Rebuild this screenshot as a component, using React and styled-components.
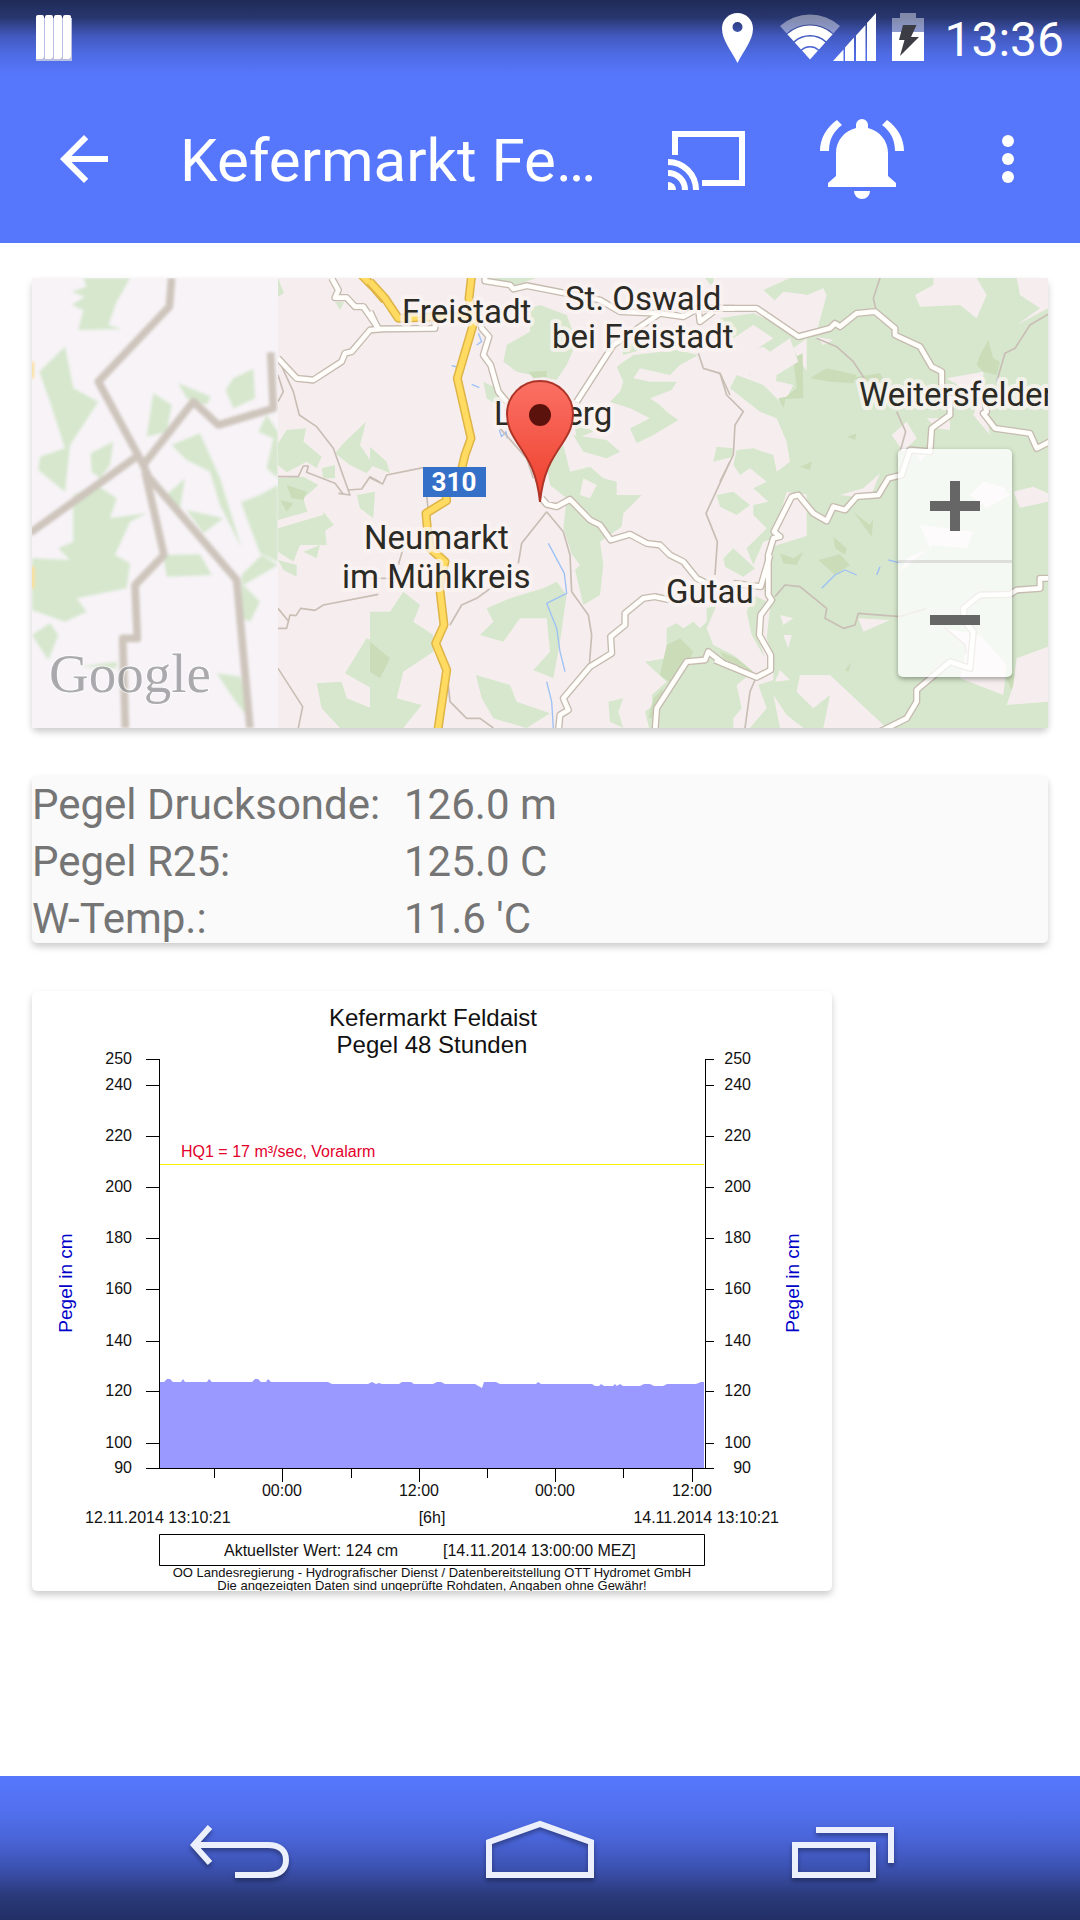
import React from 'react';
import styled, { createGlobalStyle } from 'styled-components';

const GlobalStyle = createGlobalStyle`
  * {
    box-sizing: border-box;
  }
  body {
    margin: 0;
    background-color: #fff;
    font-family: Roboto, 'Liberation Sans', sans-serif;
  }
`;

const Page = styled.div`
  display: flex;
  flex-direction: column;
  min-height: 100vh;
`;

const Header = styled.header`
  color: white;
  background: #5677fc linear-gradient(#1f2a57 0, #293770 18px, #4259be 36px, #4e6be3 54px, #5677fc 75px);
`;

const StatusBar = styled.div`
  display: flex;
  align-items: center;
  gap: 16px;
  height: 75px;
  padding: 0 16px 0 36px;
`;

const Spacer = styled.span`
  flex: 1;
`;

const Clock = styled.time`
  padding-top: 4px;
  font-size: 48px;
  line-height: 56px;
`;

const Toolbar = styled.div`
  display: flex;
  align-items: center;
  height: 168px;
  padding: 0 36px 0 48px;
`;

const Title = styled.h1`
  flex: 1;
  min-width: 0;
  margin: 0 60px;
  padding-top: 4px;
  overflow: hidden;
  white-space: nowrap;
  text-overflow: ellipsis;
  font-size: 60px;
  font-weight: 400;
  line-height: 72px;
`;

const Actions = styled.div`
  display: flex;
  align-items: center;
  gap: 64px;
`;

const IconButton = styled.button`
  display: flex;
  padding: 0;
  border: none;
  background: none;
  color: inherit;
`;

const Main = styled.main`
  display: flex;
  flex: 1;
  flex-direction: column;
  gap: 48px;
  padding: 35px 32px 48px;
`;

const Card = styled.section`
  position: relative;
  border-radius: 5px;
  background-color: ${(props) => props.$color || '#fff'};
  box-shadow: 0 4px 7px rgba(0, 0, 0, 0.2);
`;

const ChartCard = styled(Card)`
  width: 100%;
  max-width: 800px;
`;

const Drawing = styled.svg`
  display: block;
  width: 100%;
  height: ${(props) => props.$height || 'auto'};
`;

const ZoomControl = styled.div`
  position: absolute;
  right: 36px;
  bottom: 51px;
  display: flex;
  flex-direction: column;
  width: 114px;
  border-radius: 5px;
  background-color: rgba(255, 255, 255, 0.75);
  box-shadow: 0 2px 5px rgba(0, 0, 0, 0.35);
`;

const ZoomButton = styled(IconButton)`
  align-items: center;
  justify-content: center;
  height: 114px;
  color: #666;

  & + & {
    box-shadow: 0 -3px 0 rgba(0, 0, 0, 0.1);
  }
`;

const Readings = styled.table`
  border-spacing: 0;
  color: #757575;
  font-size: 42px;
  line-height: 49px;

  th,
  td {
    padding: 4px 0;
    font-weight: 400;
    text-align: left;
  }
  th {
    width: 372px;
  }
  tr:last-child > * {
    padding-bottom: 0;
  }
`;

const NavBar = styled.nav`
  display: flex;
  justify-content: center;
  height: 144px;
  background: linear-gradient(#5677fc 0, #5270ee 35px, #4a65d9 62px, #3d53b4 90px, #2a3979 120px, #222f66 144px);
`;

const NavButton = styled(IconButton)`
  align-items: center;
  justify-content: center;
  width: 300px;
  color: #eceffc;

  svg {
    overflow: visible;
    filter: drop-shadow(0 3px 2px rgba(0, 0, 0, 0.35));
  }
`;

const MapLabel = styled.text`
  fill: #2b2a25;
  stroke: rgba(250, 244, 242, 0.8);
  stroke-width: 8px;
  stroke-linejoin: round;
  paint-order: stroke;
  font-size: 33px;
`;

const GoogleMark = styled.text`
  fill: #77767a;
  fill-opacity: 0.6;
  stroke: rgba(255, 255, 255, 0.7);
  stroke-width: 2px;
  paint-order: stroke;
  font-family: 'Liberation Serif', serif;
  font-size: 55px;
`;

const RoadNumber = styled.text`
  fill: white;
  font-size: 26px;
  font-weight: 700;
`;

const ChartText = styled.text`
  fill: ${(props) => props.$color || '#111'};
  font-family: 'Liberation Sans', Arial, sans-serif;
  font-size: ${(props) => props.$size || 16}px;
  white-space: pre;
`;

/* ---------- map data, sheets drawn at triple scale ---------- */

const farForests = [
  '190,39 330,39 290,110 265,180 305,192 175,195 190,135 155,120 195,95 155,80 200,65',
  '135,245 160,370 235,410 150,540 135,680 55,615 60,575 135,550 90,410 58,320',
  '400,385 455,420 440,500 380,515',
  '475,355 572,395 560,420 500,400',
  '700,312 705,400 640,430 617,375 640,340',
  '455,540 540,505 600,640 665,850 600,720 570,620 500,585',
  '500,735 610,760 590,775 550,805',
  '495,640 480,730 440,690',
  '280,530 270,600 240,640 215,620 212,565',
  '36,880 150,885 115,850 160,830 160,690 230,660 290,700 270,760 380,745 330,770 285,870 330,895 320,970 170,1000 200,1040 135,1070 36,1035',
  '430,870 540,868 575,930 440,935',
  '663,712 720,690 774,660 774,890 720,865',
  '725,870 774,900 670,960 720,1010 690,1070 665,1060 665,930',
  '36,1110 90,1075 115,1110 85,1185',
  '590,1225 660,1235 700,1380 640,1300',
  '180,1205 290,1190 290,1210',
  '740,450 774,500 774,640 740,610 760,520 715,500',
];

const farRoads = [
  '455,39 448,125 235,350 370,600 385,635 650,945 690,1389',
  '30,804 350,575',
  '370,600 520,410 595,480 760,430 752,262',
  '375,620 432,870 345,960 352,1120 308,1120 316,1389',
];

const sheets = [
  {
    x: -12,
    y: -13,
    forests: [
      '774,39 792,85 774,95',
      '945,110 972,112 960,135',
      '774,535 800,495 858,490 850,530 905,575 890,610 860,590 800,622 774,600',
      '774,640 850,635 895,660 850,700 862,740 774,765',
      '774,790 840,770 910,750 920,840 840,840 820,890 774,860',
      '774,885 830,900 830,935 790,915',
      '850,860 900,840 890,880',
      '1038,470 1020,540 1060,600 1040,625 990,600 945,565 975,530',
      '905,610 945,600 945,640 910,640',
      '1010,690 1065,680 1060,760 1020,730',
      '910,740 942,780 910,800',
      '890,1255 965,1250 980,1300 1080,1340 1080,1389 960,1389 905,1330',
      '1040,1120 1090,1140 1090,1290 975,1225',
    ],
    shades: ['800,660 860,680 850,705 815,700', '780,705 820,715 800,740', '1050,1150 1080,1140 1080,1220'],
    clearings: [],
    tracks: [
      '774,280 820,380 838,450 890,485 940,550 990,690 955,685',
      '774,635 835,635 850,603 865,603 860,622 945,655 970,688',
      '985,675 1025,672 1050,635 1080,652',
      '774,1090 800,1090 810,1050 828,1052 842,1030 885,1036 910,1020 1075,988',
      '774,1030 805,1068',
      '774,1210 848,1325 835,1389',
      '774,330 790,380 774,410',
    ],
    roads: [
      '935,39 955,75 945,98 980,98 1005,125 1030,125 1075,190',
      '774,280 830,340 880,345 965,290 975,265 995,260 1050,195 1085,192',
    ],
    highways: ['1015,20 1062,68 1095,106'],
    streams: [],
  },
  {
    x: 338,
    y: -13,
    forests: [
      '365,39 500,39 430,62',
      '510,120 590,150 620,230 590,300 560,345 440,320 400,290 410,240 480,200 480,130',
      '620,90 700,100 690,140 640,130',
      '530,600 580,540 600,620 660,605 700,640 740,650 740,690 815,690 760,745 755,785 690,830 700,900 690,990 640,1020 600,850 580,790 590,700 540,660',
      '520,970 560,950 590,990 570,1130 550,1240 490,1215 540,1160 530,1060 450,1060 400,1130 330,1110 370,1070 350,1030 420,1000',
      '318,1230 420,1260 440,1310 540,1345 470,1389 370,1360 335,1300',
      '0,1040 60,1040 100,980 150,1020 130,1070 190,1110 190,1160 100,1220 80,1300 155,1320 100,1389 0,1389',
      '715,1310 760,1300 745,1340 760,1389 720,1370',
      '0,545 50,590 60,625 0,600',
      '340,350 400,380 380,420 350,400',
    ],
    shades: ['0,1130 60,1180 30,1240 0,1220', '475,320 530,318 530,335 490,340'],
    clearings: ['640,640 680,660 660,700 630,690', '600,860 630,900 610,920'],
    tracks: [
      '530,740 580,800 600,870 605,980 655,1050 665,1110 658,1200',
      '530,740 455,835 445,895',
      '375,960 320,1000 275,1020 240,1080',
      '0,638 38,657 50,630 160,608',
      '230,1215 240,1310 290,1360 330,1360 370,1389',
      '985,265 1000,310 1050,325 1080,390',
      '1080,590 1008,745 1042,830 1035,930',
      '170,690 175,740',
      '390,490 470,580 490,640',
      '85,900 105,830',
      '0,940 60,940',
    ],
    roads: [
      '345,20 345,48 420,60 430,72 470,62 690,105 750,140 870,145 940,155 985,130 1094,130',
      '985,130 990,170 1030,140',
      '870,145 730,240 620,410',
      '330,150 335,190 357,215 340,270 362,300 385,380 410,410',
      '0,140 25,192 195,190 195,165',
      '515,700 530,718 560,725 600,703 660,765 690,780 722,825 780,808 830,835 870,840 900,870 940,890 980,940 1010,955',
      '565,1400 570,1350 595,1335 580,1300 660,1205 725,1165 722,1115 765,1080 765,1045 820,1000 855,995 900,1005',
      '855,1400 860,1330 950,1190 1005,1185 1015,1160 1060,1195 1100,1210',
    ],
    highways: [
      '0,50 45,100 85,160 200,155 310,155',
      '305,30 297,100 312,170 262,340 303,520 285,570 275,612',
      '228,690 230,707 168,745 172,790 180,850 225,890 208,960 222,1080 197,1135 230,1215 203,1400',
    ],
    streams: [
      '535,835 583,925 590,985 530,1015 560,1090 570,1160 585,1220',
      '530,1250 545,1310 550,1389',
      '325,205 335,230 320,240',
      '245,302 262,306',
      '305,358 328,368',
      '388,495 395,515 408,500 412,520',
    ],
  },
  {
    x: 488,
    y: -3,
    forests: [
      '750,9 870,9 870,60 790,50 740,100 720,60 690,40',
      '600,130 700,115 780,150 860,190 820,220 840,260 870,300 870,660 800,650 780,720 760,790 730,800 700,870 680,820 740,760 700,720 700,690 745,680 700,640 740,620 690,580 660,600 640,570 650,525 700,520 760,540 770,590 810,560 800,500 770,430 720,410 630,340 650,300 730,330 790,390 820,330 690,300 680,240 760,190 700,150 640,190 600,170',
      '590,515 640,520 640,545 580,560',
      '610,850 640,820 705,880 670,905 615,875',
      '740,820 870,780 870,1370 680,1370 740,1300 715,1230 760,1215 760,1150 740,1090 750,1000 730,940',
      '560,1000 590,990 560,1060 580,1110 640,1140 700,1190 650,1230 665,1300 640,1330 640,1370 390,1370 375,1310 400,1290 395,1260 440,1220 375,1160 440,1150 440,1060 470,1045 490,1060 520,1040 540,1060 560,1040',
      '700,960 740,980 715,1030 730,1070 715,1090 735,1150 695,1080 680,1010',
      '290,275 340,240 470,225 535,240 480,270 450,300 360,280 340,310 390,320 470,320 455,345 390,370 420,390 440,410 475,435 400,480 350,505 330,460 390,430 330,400 270,380 300,350 310,320',
      '300,205 360,200 380,220 310,240',
      '160,480 260,495 300,530 260,550 190,530',
      '555,9 600,9 600,30 570,28',
      '590,660 640,650 690,690 650,720 600,695',
      '160,430 220,470 170,490',
    ],
    shades: [
      '820,250 848,235 850,370 790,372 830,340',
      '440,1110 480,1090 520,1130 500,1170 460,1230 420,1200',
      '400,1270 430,1240 410,1330 385,1330',
      '780,835 820,850 850,830 830,870 790,865',
      '600,1130 650,1150 700,1190 620,1170',
      '775,370 800,365 790,400',
    ],
    clearings: ['780,1020 820,1030 790,1050', '790,1080 815,1080 805,1120', '780,1185 810,1215 765,1220', '760,1260 800,1320 850,1359 780,1359'],
    tracks: [],
    roads: [],
    highways: [],
    streams: [],
  },
  {
    x: 688,
    y: -13,
    forests: ['260,20 1000,20 1000,1400 260,1400'],
    shades: [
      '270,340 320,310 410,330 400,355 330,350',
      '385,340 480,325 500,360 430,345',
      '780,270 805,225 820,280 840,290 830,330 790,320 770,300',
      '295,885 360,868 390,900 345,930',
      '240,605 275,590 270,615',
      '380,515 410,505 405,525',
      '400,740 450,780 460,760 455,815',
      '860,1240 890,1220 880,1290',
      '340,815 380,850 375,870 345,850',
      '375,1215 395,1190 385,1220',
    ],
    clearings: [
      '-20,39 210,39 130,75 190,130 190,90 250,95 310,70 320,90 290,200 225,195 110,130 -20,120',
      '70,260 130,245 150,260 210,220 235,290 170,330 165,365 95,340',
      '240,1230 330,1230 500,1389 310,1389 330,1290 280,1330 230,1280',
      '640,39 770,39 800,90 770,160 720,120 600,125 585,90 640,60',
      '890,39 984,39 984,130 890,180 960,130 900,90',
      '560,470 590,520 550,560 515,510',
      '480,625 450,700 360,690 430,670',
      '620,460 690,460 690,495 650,490',
      '680,340 790,320 790,400 810,510 760,450 780,400',
      '790,650 850,665 870,690 800,730 750,690',
      '600,780 760,800 740,850 640,840 540,920 560,880 630,850',
      '880,680 940,665 984,685 984,710 900,728',
      '890,1180 984,1145 984,1310 860,1320 880,1260',
      '670,1090 780,1110 860,1200 850,1290 720,1240 740,1150',
      '415,1060 510,1065 430,1100',
      '290,215 340,225 310,240',
      '580,545 625,565 600,590',
    ],
    tracks: [
      '480,39 460,100 467,130',
      '984,148 930,180 885,250 855,265 830,350',
      '290,220 350,245 400,290 440,350',
      '530,440 557,500 540,560',
      '0,325 20,390 70,440 45,480 40,570 0,650',
      '165,995 195,960 240,965 320,1030 315,1060 370,1090 405,1080 415,1045 540,1055 620,1030',
      '105,1245 90,1280 75,1389',
      '670,1085 735,1140 738,1165',
    ],
    roads: [
      '-12,130 110,130 235,215 330,190 345,175 360,185 410,145 465,140 525,190 525,210 600,245 635,305 665,320 665,370',
      '730,400 690,400 690,450 635,490 630,560 570,555 545,630 505,640 475,690 410,695 375,735 340,725 320,768 280,745 235,690 215,695 162,800 180,815 160,820 145,870 145,990 155,1005 122,1050 118,1110 152,1170 152,1215 110,1237 -15,1185',
      '150,870 122,965 40,955',
      '790,395 800,440 790,445 825,490 930,505 950,550 1000,525',
      '1000,940 960,940 960,970 890,975 870,988 780,990 730,1030 735,1070 760,1100 750,1210 690,1190 590,1275 590,1310 560,1360 480,1400',
    ],
    highways: [],
    streams: ['305,970 345,930 375,915 410,930', '470,930 480,905', '505,885 545,895'],
  },
];

const placeNames = [
  { name: 'Freistadt', x: 370, y: 45 },
  { name: 'St. Oswald', x: 533, y: 32 },
  { name: 'bei Freistadt', x: 520, y: 70 },
  { name: 'Lasberg', x: 462, y: 147 },
  { name: 'Neumarkt', x: 332, y: 271 },
  { name: 'im Mühlkreis', x: 310, y: 310 },
  { name: 'Gutau', x: 634, y: 325 },
  { name: 'Weitersfelden', x: 827, y: 128 },
];

const placeSheet = (sheet) => `translate(${sheet.x} ${sheet.y}) scale(0.33333)`;

function Lines({ points, color, width }) {
  return points.map((line) => (
    <polyline key={line} points={line} fill="none" stroke={color} strokeWidth={width} strokeLinejoin="round" />
  ));
}

function Areas({ points, color }) {
  return points.map((area) => <polygon key={area} points={area} fill={color} />);
}

function StationMap() {
  return (
    <Drawing $height="450px" viewBox="0 0 1016 450" preserveAspectRatio="xMidYMid slice" role="img" aria-label="Karte">
      <defs>
        <linearGradient id="marker" x1="0" y1="0" x2="0" y2="1">
          <stop offset="0" stopColor="#fb7064" />
          <stop offset="1" stopColor="#ee3f2c" />
        </linearGradient>
        <filter id="coarse">
          <feGaussianBlur stdDeviation="4" />
        </filter>
        <clipPath id="farSheet">
          <rect x="0" y="0" width="246" height="450" />
        </clipPath>
        <clipPath id="nearSheet">
          <rect x="246" y="0" width="770" height="450" />
        </clipPath>
      </defs>
      <rect width="1016" height="450" fill="#f6eeee" />

      <g clipPath="url(#nearSheet)">
        {sheets.map((sheet) => (
          <g key={sheet.x} transform={placeSheet(sheet)}>
            <Areas points={sheet.forests} color="#d6e7cd" />
            <Areas points={sheet.shades} color="#cbdcb9" />
            <Areas points={sheet.clearings} color="#f6eeee" />
          </g>
        ))}
        {sheets.map((sheet) => (
          <g key={sheet.x} transform={placeSheet(sheet)}>
            <Lines points={sheet.streams} color="#9dc0f5" width="4" />
            <Lines points={sheet.tracks} color="#c9beb5" width="5" />
            <Lines points={sheet.roads} color="#c6bbb0" width="22" />
          </g>
        ))}
        {sheets.map((sheet) => (
          <g key={sheet.x} transform={placeSheet(sheet)}>
            <Lines points={sheet.roads} color="#fffefb" width="14" />
            <Lines points={sheet.highways} color="#dfb447" width="27" />
            <Lines points={sheet.highways} color="#ffdb62" width="18" />
          </g>
        ))}
      </g>

      <g clipPath="url(#farSheet)">
        <rect width="246" height="450" fill="#f7f3f7" />
        <g transform="translate(-12 -13) scale(0.33333)" filter="url(#coarse)">
          <Areas points={farForests} color="#d6e7cd" />
          <Lines points={farRoads} color="#cec5bc" width="23" />
          <Areas points={['30,290 42,290 42,340 30,340', '30,905 44,905 44,970 30,970']} color="#fbdf9a" />
        </g>
      </g>

      {placeNames.map((place) => (
        <MapLabel key={place.name} x={place.x} y={place.y}>
          {place.name}
        </MapLabel>
      ))}
      <rect x="391" y="189" width="63" height="30" fill="#3570c8" />
      <RoadNumber x="422" y="213" textAnchor="middle">
        310
      </RoadNumber>
      <path
        d="M508 224 C505 195 497 182 486 166 C479 155 475 148 475 136 A33 33 0 0 1 541 136 C541 148 537 155 530 166 C519 182 511 195 508 224Z"
        fill="url(#marker)"
        stroke="#ad3528"
        strokeWidth="2"
      />
      <circle cx="508" cy="137" r="11" fill="#5c120c" />
      <GoogleMark x="17" y="414">
        Google
      </GoogleMark>
    </Drawing>
  );
}

/* ---------- chart ---------- */

const levels = [
  { value: 250, y: 68 },
  { value: 240, y: 94 },
  { value: 220, y: 145 },
  { value: 200, y: 196 },
  { value: 180, y: 247 },
  { value: 160, y: 298 },
  { value: 140, y: 350 },
  { value: 120, y: 400 },
  { value: 100, y: 452 },
  { value: 90, y: 477 },
];

const hours = [
  { x: 182 },
  { x: 250, label: '00:00' },
  { x: 319 },
  { x: 387, label: '12:00' },
  { x: 455 },
  { x: 523, label: '00:00' },
  { x: 591 },
  { x: 660, label: '12:00' },
];

const waterLevel =
  '128,477 128,391 132,391 135,388 138,388 141,391 149,391 151,388 153,391 175,391 177,388 180,391 220,391 223,388 226,388 229,391 234,391 236,388 239,391 296,391 300,393 336,393 340,391 344,393 347,392 350,393 367,393 370,391 379,391 382,393 401,393 405,391 409,391 413,393 443,393 450,397 452,391 464,391 468,393 504,393 506,391 509,393 560,393 563,395 567,395 569,393 572,395 581,395 583,393 585,395 588,393 591,395 608,395 612,393 618,393 622,395 631,395 635,393 664,393 669,391 672,391 672,477';

function LevelChart() {
  return (
    <Drawing viewBox="0 0 800 600" role="img" aria-label="Kefermarkt Feldaist, Pegel 48 Stunden">
      <ChartText $size={24} x="401" y="35" textAnchor="middle">
        Kefermarkt Feldaist
      </ChartText>
      <ChartText $size={24} x="400" y="62" textAnchor="middle">
        Pegel 48 Stunden
      </ChartText>

      <polygon points={waterLevel} fill="#9999ff" />
      <rect x="127" y="173" width="545" height="1" fill="#f2f200" />
      <ChartText $color="#e3002b" x="149" y="166">
        HQ1 = 17 m³/sec, Voralarm
      </ChartText>

      <g fill="#000">
        <rect x="127" y="69" width="1" height="409" />
        <rect x="673" y="69" width="1" height="409" />
        <rect x="127" y="477" width="547" height="1" />
        {levels.map((level) => (
          <React.Fragment key={level.value}>
            <rect x="114" y={level.y} width="14" height="1" />
            <rect x="673" y={level.y} width="9" height="1" />
          </React.Fragment>
        ))}
        {hours.map((hour) => (
          <rect key={hour.x} x={hour.x} y="477" width="1" height={hour.label ? 14 : 10} />
        ))}
      </g>

      {levels.map((level) => (
        <React.Fragment key={level.value}>
          <ChartText x="100" y={level.y + 5} textAnchor="end">
            {level.value}
          </ChartText>
          <ChartText x="719" y={level.y + 5} textAnchor="end">
            {level.value}
          </ChartText>
        </React.Fragment>
      ))}
      {hours
        .filter((hour) => hour.label)
        .map((hour) => (
          <ChartText key={hour.x} x={hour.x} y="505" textAnchor="middle">
            {hour.label}
          </ChartText>
        ))}

      <ChartText $color="#0000c8" $size={19} textAnchor="middle" transform="translate(40 292) rotate(-90)">
        Pegel in cm
      </ChartText>
      <ChartText $color="#0000c8" $size={19} textAnchor="middle" transform="translate(767 292) rotate(-90)">
        Pegel in cm
      </ChartText>

      <ChartText x="53" y="532">
        12.11.2014 13:10:21
      </ChartText>
      <ChartText x="400" y="532" textAnchor="middle">
        [6h]
      </ChartText>
      <ChartText x="747" y="532" textAnchor="end">
        14.11.2014 13:10:21
      </ChartText>

      <path d="M127.500 543.500H672.500V574.500H127.500Z" fill="none" stroke="#000" />
      <ChartText x="192" y="565">
        Aktuellster Wert: 124 cm
      </ChartText>
      <ChartText x="411" y="565">
        [14.11.2014 13:00:00 MEZ]
      </ChartText>
      <ChartText $size={13} x="400" y="586" textAnchor="middle">
        OO Landesregierung - Hydrografischer Dienst / Datenbereitstellung OTT Hydromet GmbH
      </ChartText>
      <ChartText $size={13} x="400" y="599" textAnchor="middle">
        Die angezeigten Daten sind ungeprüfte Rohdaten, Angaben ohne Gewähr!
      </ChartText>
    </Drawing>
  );
}

/* ---------- icons ---------- */

function BarsIcon() {
  return (
    <svg width="36" height="48" viewBox="0 0 36 48">
      {[0, 9, 18, 27].map((x) => (
        <g key={x}>
          <path d={`M${x} 4h9v43h-9z`} fill="#b9bfe0" />
          <path d={`M${x} 45V3q0-2 2-2h4q2 0 2 2v40l-2 2z`} fill="white" />
        </g>
      ))}
    </svg>
  );
}

function PlaceIcon() {
  return (
    <svg width="42" height="50" viewBox="0 0 42 50" fill="white">
      <path
        fillRule="evenodd"
        d="M15.500 0C24 0 31 6.500 31 15.500C31 27 22 37 15.500 50C9 37 0 27 0 15.500C0 6.500 7 0 15.500 0ZM15.500 9a5 5 0 1 0 0 10a5 5 0 1 0 0-10Z"
      />
    </svg>
  );
}

function NetworkIcon() {
  return (
    <svg width="96" height="50" viewBox="0 0 96 50" fill="white">
      <path d="M0 13A45 45 0 0 1 60 13L53.300 20.400A35 35 0 0 0 6.700 20.400Z" opacity=".42" />
      <path d="M7.300 21.200A34 34 0 0 1 52.700 21.200L46.300 28.200A24.500 24.500 0 0 0 13.700 28.200Z" />
      <path d="M14.700 29.400A23 23 0 0 1 45.300 29.400L39 36.400A13.500 13.500 0 0 0 21 36.400Z" />
      <path d="M22 37.600A12 12 0 0 1 38 37.600L30 46.500Z" />
      <path d="M53 48L63.500 36.500V48ZM65 48V34.500L74 24.500V48ZM76 48V22.500L85.500 12V48ZM87 48V10L96 0V48Z" />
    </svg>
  );
}

function BatteryIcon() {
  return (
    <svg width="36" height="50" viewBox="0 0 36 50">
      <path d="M8 0h16v5h8v14H0V5h8z" fill="white" opacity=".42" />
      <path d="M0 19h32v29H0z" fill="white" />
      <path d="M11 12H24.500L19 24H27L8 43L12.500 27H7Z" fill="#3c3c44" />
    </svg>
  );
}

function BackArrowIcon() {
  return (
    <svg width="72" height="72" viewBox="0 0 24 24" fill="currentColor">
      <path d="M20 11H7.830l5.590-5.590L12 4l-8 8 8 8 1.410-1.410L7.830 13H20v-2z" />
    </svg>
  );
}

function CastIcon() {
  return (
    <svg width="84" height="84" viewBox="0 0 84 84" fill="none" stroke="currentColor" strokeWidth="6">
      <path d="M11 38V17H78V66H38" />
      <path d="M4 45A28 28 0 0 1 32 73M4 56A17 17 0 0 1 21 73" />
      <path d="M4 65A8 8 0 0 1 12 73H4Z" fill="currentColor" stroke="none" />
    </svg>
  );
}

function BellIcon() {
  return (
    <svg width="96" height="96" viewBox="0 0 96 96" fill="currentColor">
      <path d="M44 17V14a6 6 0 0 1 12 0V17C68 20 76 30 76 42V65L84 72V76H16V72L24 65V42C24 30 32 20 44 17Z" />
      <path d="M42 80H58A8 8 0 0 1 42 80Z" />
      <path d="M8 40C8 27 15 16 25 9L30 14C22 20 17 28 17 40ZM92 40C92 27 85 16 75 9L70 14C78 20 83 28 83 40Z" />
    </svg>
  );
}

function MoreIcon() {
  return (
    <svg width="72" height="72" viewBox="0 0 72 72" fill="currentColor">
      <circle cx="36" cy="18" r="6" />
      <circle cx="36" cy="36" r="6" />
      <circle cx="36" cy="54" r="6" />
    </svg>
  );
}

function ZoomIcon({ plus }) {
  return (
    <svg width="50" height="50" viewBox="0 0 50 50" fill="currentColor">
      <path d="M0 20H50V30H0Z" />
      {plus && <path d="M20 0H30V50H20Z" />}
    </svg>
  );
}

function NavIcon({ children }) {
  return (
    <svg width="108" height="60" viewBox="0 0 108 60" fill="none" stroke="currentColor" strokeWidth="6">
      {children}
    </svg>
  );
}

export default function App() {
  return (
    <Page>
      <GlobalStyle />
      <Header>
        <StatusBar>
          <BarsIcon />
          <Spacer />
          <PlaceIcon />
          <NetworkIcon />
          <BatteryIcon />
          <Clock>13:36</Clock>
        </StatusBar>
        <Toolbar>
          <IconButton type="button" aria-label="Zurück">
            <BackArrowIcon />
          </IconButton>
          <Title>Kefermarkt Feldaist</Title>
          <Actions>
            <IconButton type="button" aria-label="Streamen">
              <CastIcon />
            </IconButton>
            <IconButton type="button" aria-label="Alarm">
              <BellIcon />
            </IconButton>
            <IconButton type="button" aria-label="Mehr">
              <MoreIcon />
            </IconButton>
          </Actions>
        </Toolbar>
      </Header>

      <Main>
        <Card>
          <StationMap />
          <ZoomControl>
            <ZoomButton type="button" aria-label="Vergrößern">
              <ZoomIcon plus />
            </ZoomButton>
            <ZoomButton type="button" aria-label="Verkleinern">
              <ZoomIcon />
            </ZoomButton>
          </ZoomControl>
        </Card>

        <Card $color="#fafafa">
          <Readings>
            <tbody>
              <tr>
                <th scope="row">Pegel Drucksonde:</th>
                <td>126.0 m</td>
              </tr>
              <tr>
                <th scope="row">Pegel R25:</th>
                <td>125.0 C</td>
              </tr>
              <tr>
                <th scope="row">W-Temp.:</th>
                <td>11.6 &apos;C</td>
              </tr>
            </tbody>
          </Readings>
        </Card>

        <ChartCard>
          <LevelChart />
        </ChartCard>
      </Main>

      <NavBar>
        <NavButton type="button" aria-label="Zurück">
          <NavIcon>
            <path d="M24 9L8 27L24 45M9 27H82C95 27 100 34 100 42S95 57 82 57H49" />
          </NavIcon>
        </NavButton>
        <NavButton type="button" aria-label="Startseite">
          <NavIcon>
            <path d="M3 24L54 6L105 24V57H3Z" />
          </NavIcon>
        </NavButton>
        <NavButton type="button" aria-label="Letzte Apps">
          <NavIcon>
            <path d="M9 27H87V57H9ZM30 12H105V45" />
          </NavIcon>
        </NavButton>
      </NavBar>
    </Page>
  );
}
